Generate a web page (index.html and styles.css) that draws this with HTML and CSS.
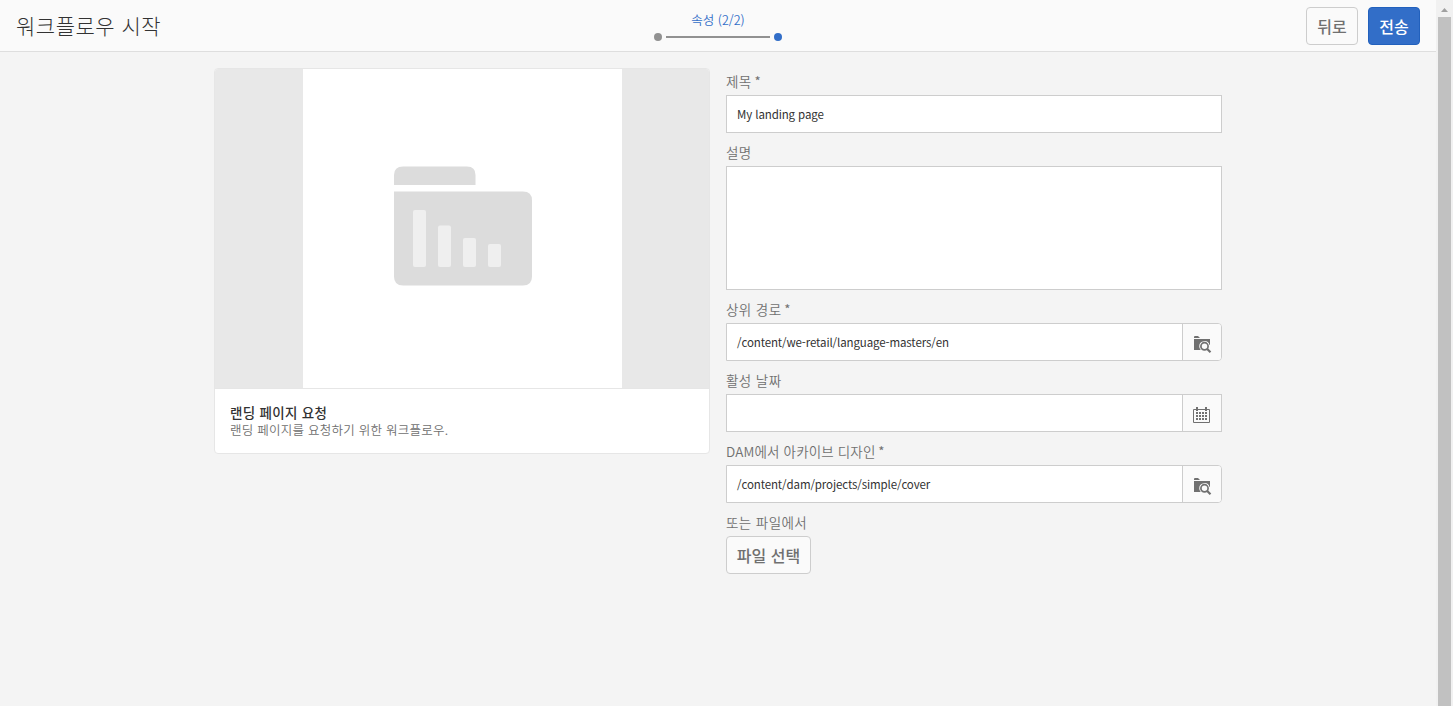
FILE: index.html
```html
<!DOCTYPE html>
<html lang="ko">
<head>
<meta charset="utf-8">
<title>워크플로우 시작</title>
<link rel="stylesheet" href="styles.css">
</head>
<body>
<svg class="symbols" width="0" height="0" aria-hidden="true">
  <symbol id="folder-search" viewBox="0 0 18 18">
    <path d="M0 2V1Q0 0 1 0H4L6 2Z"/>
    <path d="M0 3H16V9H15.600A5.300 5.300 0 0 0 5.200 10.300A5.300 5.300 0 0 0 6.700 14H0Z"/>
    <circle cx="10.500" cy="10.300" r="3.600" fill="none" stroke="currentColor" stroke-width="1.700"/>
    <path d="M13.200 13L16.500 16.300" fill="none" stroke="currentColor" stroke-width="2.200"/>
  </symbol>
  <symbol id="calendar" viewBox="0 0 18 18">
    <path d="M.5 2.500H16.500V15.500H.5Z" fill="none" stroke="currentColor"/>
    <path d="M3 0H5V4H3ZM12 0H14V4H12Z"/>
    <path d="M3 6h11M3 9h11M3 12h11" fill="none" stroke="currentColor" stroke-width="2" stroke-dasharray="2 1"/>
  </symbol>
</svg>
<div class="window">
  <div class="page">
    <header class="topbar">
      <h1 class="title">워크플로우 시작</h1>
      <div class="steps">
        <span class="step-label">속성 (2/2)</span>
        <div class="step-track"><i class="dot"></i><i class="line"></i><i class="dot active"></i></div>
      </div>
      <div class="actions">
        <button class="button">뒤로</button>
        <button class="button primary">전송</button>
      </div>
    </header>
    <main class="content">
      <section class="card">
        <div class="preview">
          <div class="thumb">
            <svg width="138" height="120" viewBox="0 0 138 120">
              <path d="M0 19V9Q0 .5 9 .5H73Q81.500 .5 81.500 9V19Z" fill="#dcdcdc"/>
              <path d="M0 25.500H129Q138 25.500 138 34.500V110.500Q138 119.500 129 119.500H9Q0 119.500 0 110.500Z" fill="#dcdcdc"/>
              <g fill="#efefef">
                <rect x="19" y="44" width="13" height="57" rx="2"/>
                <rect x="44" y="59.500" width="13" height="41.500" rx="2"/>
                <rect x="69" y="72" width="13" height="29" rx="2"/>
                <rect x="94" y="78" width="13" height="23" rx="2"/>
              </g>
            </svg>
          </div>
        </div>
        <div class="card-body">
          <div class="card-title">랜딩 페이지 요청</div>
          <div class="card-text">랜딩 페이지를 요청하기 위한 워크플로우.</div>
        </div>
      </section>
      <form class="form">
        <label class="label">제목<span class="required"> *</span></label>
        <div class="field"><span class="value">My landing page</span></div>
        <label class="label">설명</label>
        <div class="field area"></div>
        <label class="label">상위 경로<span class="required"> *</span></label>
        <div class="field rounded"><span class="value">/content/we-retail/language-masters/en</span><span class="addon"><svg class="icon"><use href="#folder-search"/></svg></span></div>
        <label class="label">활성 날짜</label>
        <div class="field"><span class="value"></span><span class="addon calendar"><svg class="icon"><use href="#calendar"/></svg></span></div>
        <label class="label archive">DAM에서 아카이브 디자인<span class="required"> *</span></label>
        <div class="field rounded"><span class="value">/content/dam/projects/simple/cover</span><span class="addon"><svg class="icon"><use href="#folder-search"/></svg></span></div>
        <label class="label">또는 파일에서</label>
        <button class="button file" type="button">파일 선택</button>
      </form>
    </main>
  </div>
  <div class="scrollbar"><i class="arrow"></i><i class="bar"></i></div>
</div>
</body>
</html>
```
FILE: styles.css
```css
* { box-sizing: border-box; }
body { margin: 0; overflow: hidden; background: #f4f4f4; color: #323232; font: 13px/18px "Noto Sans CJK KR", "Noto Sans", sans-serif; }
.symbols { display: block; }
.window { display: flex; height: 706px; }
.page { flex: 1; }
.topbar { display: grid; grid-template-columns: 1fr 160px 1fr; height: 52px; background: #fafafa; border-bottom: 1px solid #dedede; }
.title { margin: 0; padding: 0 0 0 16px; font-size: 21px; line-height: 51px; font-weight: 300; letter-spacing: .5px; white-space: nowrap; }
.steps { display: flex; flex-direction: column; align-items: center; padding-top: 11px; color: #326ec8; }
.step-label { font-size: 12.5px; line-height: 18px; font-weight: 350; white-space: nowrap; }
.step-track { display: flex; align-items: center; gap: 4px; margin-top: 4px; }
.dot { width: 8px; height: 8px; border-radius: 50%; background: #919191; }
.dot.active { background: #326ec8; }
.line { width: 104px; height: 2px; background: #919191; }
.actions { display: flex; justify-content: flex-end; gap: 10px; padding: 7px 16px 0 0; }
.button { height: 38px; padding: 0; border: 1px solid #cdcdcd; border-radius: 4px; background: #fafafa; color: #707070; font: 500 16px/34px "Noto Sans CJK KR", sans-serif; white-space: nowrap; }
.actions .button { width: 52px; }
.button.primary { border-color: #2261bd; background: #326ec8; color: #fff; }
.content { display: flex; gap: 16px; padding: 16px 0 0 214px; align-items: flex-start; }
.card { width: 496px; height: 386px; border: 1px solid #e6e6e6; border-radius: 4px; overflow: hidden; background: #fff; }
.preview { height: 320px; display: flex; justify-content: center; background: #e8e8e8; border-bottom: 1px solid #e6e6e6; }
.thumb { width: 319px; height: 319px; padding: 97px 0 0 91px; background: #fff; }
.thumb svg { display: block; }
.card-body { padding: 14px 15px; }
.card-title { font-weight: 500; font-size: 13.5px; line-height: 18px; letter-spacing: .3px; }
.card-text { font-size: 12.500px; line-height: 18px; font-weight: 350; letter-spacing: .25px; color: #707070; }
.form { display: flex; flex-direction: column; width: 496px; padding-top: 4px; }
.label { height: 33px; padding-top: 10px; font-size: 13.5px; line-height: 18px; font-weight: 350; letter-spacing: .4px; color: #707070; white-space: nowrap; }
.label.archive { letter-spacing: .15px; }
.required { margin-left: -1px; letter-spacing: 0; }
.label:first-child { height: 23px; padding-top: 0; }
.field { display: flex; height: 38px; border: 1px solid #cdcdcd; background: #fff; overflow: hidden; }
.field.area { height: 124px; }
.field.rounded { border-radius: 0 4px 4px 0; }
.value { flex: 1; padding-left: 10px; font-size: 11.5px; line-height: 37px; font-weight: 400; letter-spacing: -.11px; }
.addon { width: 39px; padding: 12px 0 0 11px; border-left: 1px solid #cdcdcd; background: #fafafa; color: #707070; }
.addon.calendar { padding: 12px 0 0 10px; }
.icon { display: block; width: 18px; height: 18px; fill: currentColor; }
.file { align-self: flex-start; width: 85px; }
.scrollbar { width: 17px; height: 706px; padding: 8px 2px 0; background: #f1f1f1; }
.arrow { display: block; width: 7px; height: 4px; margin: 0 auto; background: #a0a0a0; clip-path: polygon(50% 0, 100% 100%, 0 100%); }
.bar { display: block; height: 689px; margin-top: 5px; background: #c1c1c1; }
```
